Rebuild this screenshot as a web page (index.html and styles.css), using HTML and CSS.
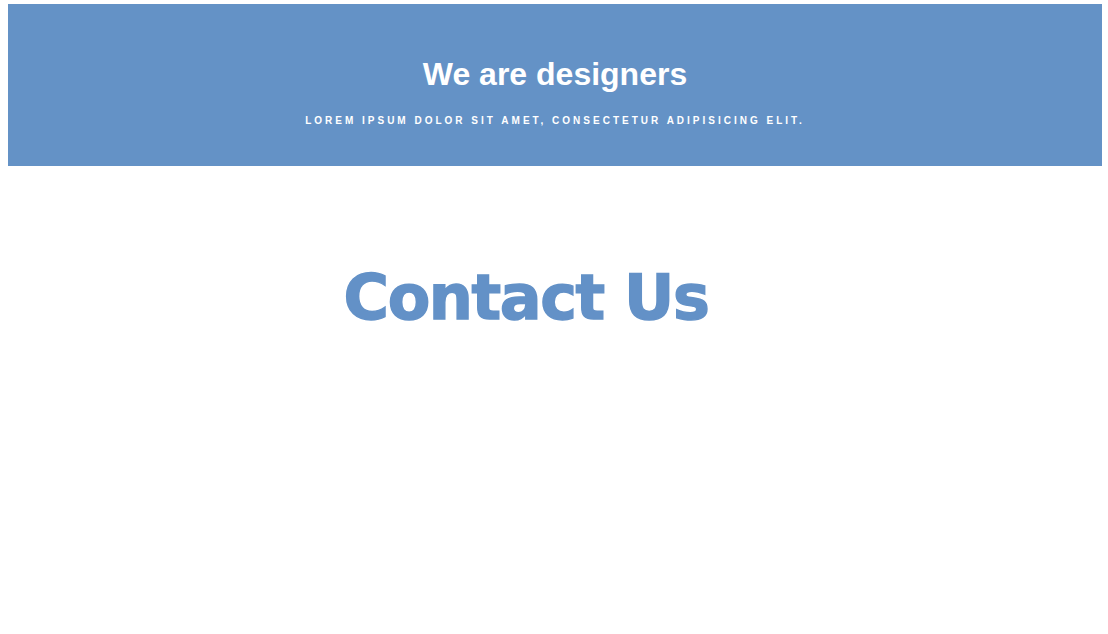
FILE: index.html
```html
<!DOCTYPE html>
<html>
<head>
<meta charset="utf-8">
<link rel="stylesheet" href="styles.css">
</head>
<body>
<header class="hero">
  <h1 class="hero-title">We are designers</h1>
  <p class="hero-sub">Lorem ipsum dolor sit amet, consectetur adipisicing elit.</p>
</header>
<main class="contact">
  <h2 class="contact-title">Contact Us</h2>
</main>
</body>
</html>
```
FILE: styles.css
```css
html, body {
  margin: 0;
  background: #ffffff;
}
body {
  padding: 4px 6px 0 8px;
  font-family: "Liberation Sans", Arial, sans-serif;
}
.hero {
  background: #6492c6;
  height: 162px;
  display: flex;
  flex-direction: column;
  align-items: center;
  color: #ffffff;
}
.hero-title {
  margin: 51px 0 0;
  font-size: 32px;
  font-weight: bold;
  line-height: 38px;
  letter-spacing: 0;
}
.hero-sub {
  margin: 22px 0 0;
  font-size: 10px;
  font-weight: bold;
  text-transform: uppercase;
  letter-spacing: 3px;
  line-height: 12px;
}
.contact {
  display: flex;
  justify-content: center;
  padding-right: 58px;
}
.contact-title {
  margin: 96px 0 0;
  font-family: "DejaVu Sans", sans-serif;
  font-weight: bold;
  font-size: 62px;
  line-height: 72px;
  color: #6391c7;
  letter-spacing: -1.4px;
  -webkit-text-stroke: 1.4px #6391c7;
}
```
